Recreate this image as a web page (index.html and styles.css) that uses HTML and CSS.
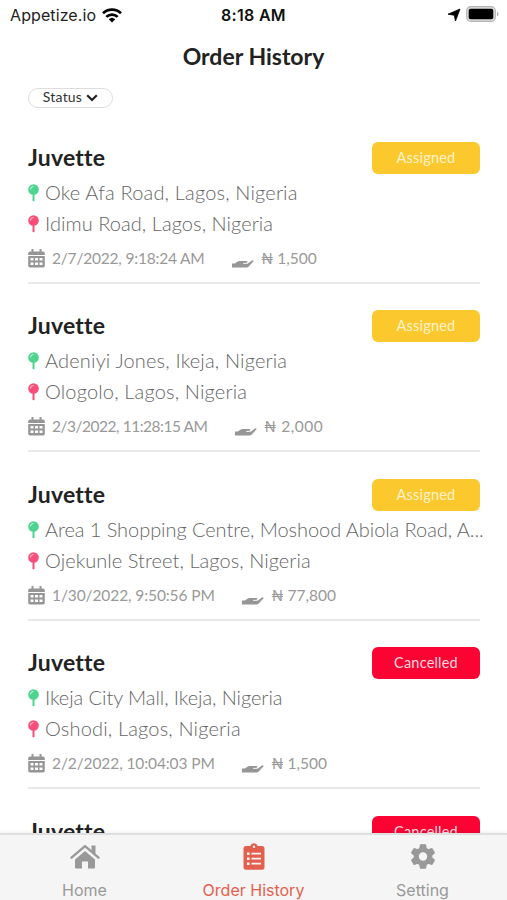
FILE: index.html
```html
<!DOCTYPE html>
<html lang="en">
<head>
<meta charset="utf-8">
<title>Order History</title>
<link rel="stylesheet" href="styles.css">
</head>
<body>
<svg class="sprite" aria-hidden="true">
  <symbol id="pin" viewBox="0.5 0 11 18"><path d="M5 10h2v6.500l-1 1-1-1z"/><circle cx="6" cy="5.500" r="5.300"/><path d="M3 5a3 3 0 0 1 2.600-2.500" fill="none" stroke="#fff" stroke-opacity=".75" stroke-width="1.100" stroke-linecap="round"/></symbol>
  <symbol id="calendar" viewBox="0 0 17 19"><path d="M3.500 0h2v2.400h6V0h2v2.400H15a1.800 1.800 0 0 1 1.800 1.800V6H.2V4.200A1.800 1.800 0 0 1 2 2.400h1.500z"/><path fill-rule="evenodd" d="M.2 7h16.600v9.800A1.700 1.700 0 0 1 15.100 18.500H1.900A1.700 1.700 0 0 1 .2 16.800zM2.500 9v2.500h3V9zM7 9v2.500h3V9zM11.500 9v2.500h3V9zM2.500 13.500V16h3v-2.500zM7 13.500V16h3v-2.500zM11.500 13.500V16h3v-2.500z"/></symbol>
  <symbol id="hand" viewBox="0 0 22 9"><path d="M0 3.500h3C5 1.500 7 1 9 1h5.500c1.300 0 1.300 1.700 0 1.800l-3.500.3v.7h4.500L20 .5c1-.7 2 .2 1.300 1.100l-4.600 5c-.7.700-1.300.9-2.200.9H0z"/></symbol>
</svg>
<div class="screen">
  <header class="statusbar">
    <div class="carrier"><span class="carrier-name">Appetize.io</span>
      <svg class="wifi" viewBox="0 0 20 15"><g fill="none" stroke="#000" stroke-width="2.600"><path d="M1 5.200a13 13 0 0 1 18 0"/><path d="M4.300 8.900a8.200 8.200 0 0 1 11.400 0"/></g><path d="M6.700 11.200a4.800 4.800 0 0 1 6.600 0L10 14.600z"/></svg>
    </div>
    <div class="clock">8:18 AM</div>
    <div class="power">
      <svg class="locate" viewBox="0 0 12 12"><path d="M12 0 7.500 12 6.200 6.200 0 5.200z" stroke="#000" stroke-width=".8" stroke-linejoin="round"/></svg>
      <svg class="battery" viewBox="0 0 33 16"><rect x=".7" y=".7" width="28.600" height="14.600" rx="4" fill="#ddd" stroke="#b5b5b5" stroke-width="1.200"/><rect x="2.700" y="2.700" width="24.600" height="10.600" rx="2"/><path d="M31 5.500q1.500.8 1.500 2.500T31 10.500z" fill="#aaa"/></svg>
    </div>
  </header>
  <h1>Order History</h1>
  <button class="filter"><span class="filter-label">Status</span><svg viewBox="0 0 12 8"><path d="m1.200 1.200 4.800 4.800 4.800-4.800" fill="none" stroke="#222" stroke-width="2.200"/></svg></button>
  <main class="orders">
    <article class="order">
      <div class="order-head"><h2>Juvette</h2><span class="badge">Assigned</span></div>
      <p class="place from wide"><svg><use href="#pin"/></svg><span>Oke Afa Road, Lagos, Nigeria</span></p>
      <p class="place to"><svg><use href="#pin"/></svg><span>Idimu Road, Lagos, Nigeria</span></p>
      <div class="meta"><svg class="cal"><use href="#calendar"/></svg><time class="snug">2/7/2022, 9:18:24 AM</time><svg class="hand"><use href="#hand"/></svg><span class="price">₦ 1,500</span></div>
    </article>
    <article class="order">
      <div class="order-head"><h2>Juvette</h2><span class="badge">Assigned</span></div>
      <p class="place from wide"><svg><use href="#pin"/></svg><span>Adeniyi Jones, Ikeja, Nigeria</span></p>
      <p class="place to wide"><svg><use href="#pin"/></svg><span>Ologolo, Lagos, Nigeria</span></p>
      <div class="meta"><svg class="cal"><use href="#calendar"/></svg><time class="tight">2/3/2022, 11:28:15 AM</time><svg class="hand"><use href="#hand"/></svg><span class="price loose">₦ 2,000</span></div>
    </article>
    <article class="order">
      <div class="order-head"><h2>Juvette</h2><span class="badge">Assigned</span></div>
      <p class="place from narrow"><svg><use href="#pin"/></svg><span>Area 1 Shopping Centre, Moshood Abiola Road, A...</span></p>
      <p class="place to"><svg><use href="#pin"/></svg><span>Ojekunle Street, Lagos, Nigeria</span></p>
      <div class="meta"><svg class="cal"><use href="#calendar"/></svg><time>1/30/2022, 9:50:56 PM</time><svg class="hand"><use href="#hand"/></svg><span class="price">₦ 77,800</span></div>
    </article>
    <article class="order">
      <div class="order-head"><h2>Juvette</h2><span class="badge cancelled">Cancelled</span></div>
      <p class="place from narrow"><svg><use href="#pin"/></svg><span>Ikeja City Mall, Ikeja, Nigeria</span></p>
      <p class="place to wide"><svg><use href="#pin"/></svg><span>Oshodi, Lagos, Nigeria</span></p>
      <div class="meta"><svg class="cal"><use href="#calendar"/></svg><time>2/2/2022, 10:04:03 PM</time><svg class="hand"><use href="#hand"/></svg><span class="price">₦ 1,500</span></div>
    </article>
    <article class="order">
      <div class="order-head"><h2>Juvette</h2><span class="badge cancelled">Cancelled</span></div>
    </article>
  </main>
  <nav class="tabs">
    <a class="tab"><svg viewBox="0 0 30 26"><path d="M15 7 25 15.500V23.500a1 1 0 0 1-1 1h-6V17.500h-6v7H6a1 1 0 0 1-1-1v-8z"/><path d="m1.500 13.700 13.500-11.500 13.500 11.500" fill="none" stroke="currentColor" stroke-width="2.400" stroke-linecap="round" stroke-linejoin="round"/><path d="M21.500 1.500h4v9l-4-3.500z"/></svg><span>Home</span></a>
    <a class="tab active"><svg viewBox="0 0 30 26"><path fill-rule="evenodd" d="M6.500 2h5a3.600 3.600 0 0 1 7 0h5A2.300 2.300 0 0 1 25.500 4.500v19a2.300 2.300 0 0 1-2.300 2.300H6.800A2.300 2.300 0 0 1 4.500 23.500v-19A2.300 2.300 0 0 1 6.500 2z"/><g fill="#f5f5f5"><circle cx="15" cy="2.800" r="1.200"/><path d="M8 8.500h2.600v2.400H8zM12.500 8.800H22v1.800h-9.500zM8 13.500h2.600v2.400H8zM12.500 13.800H22v1.800h-9.500zM8 18.500h2.600v2.400H8zM12.500 18.800H22v1.800h-9.500z"/></g></svg><span>Order History</span></a>
    <a class="tab"><svg viewBox="0 0 30 26"><path fill-rule="evenodd" stroke="currentColor" stroke-width="1.200" stroke-linejoin="round" d="M12.500.8h5l.7 3.600 2.200 1.300 3.500-1.200 2.500 4.300-2.700 2.400v2.500l2.700 2.400-2.500 4.300-3.500-1.200-2.200 1.300-.7 3.600h-5l-.7-3.600-2.200-1.300-3.500 1.200-2.500-4.300 2.700-2.400v-2.500L3.600 8.800l2.500-4.300 3.500 1.200 2.200-1.300zM15 7.700a4.800 4.800 0 1 0 0 9.600 4.800 4.800 0 0 0 0-9.600z"/></svg><span>Setting</span></a>
  </nav>
</div>
</body>
</html>
```
FILE: styles.css
```css
* { box-sizing: border-box; }
body { margin: 0; background: #fff; font-family: Lato, "Liberation Sans", sans-serif; color: #222; }
h1, h2, p { margin: 0; }
.sprite { position: absolute; width: 0; height: 0; }
.screen { width: 507px; height: 900px; overflow: hidden; display: flex; flex-direction: column; }
.statusbar { height: 30px; flex: none; padding: 0 8px 0 10px; display: grid; grid-template-columns: 1fr auto 1fr; align-items: center; font-family: Inter, sans-serif; font-size: 16px; color: #222; }
.carrier { display: flex; align-items: center; gap: 6px; }
.carrier-name { letter-spacing: .1px; }
.wifi { width: 20px; height: 15px; }
.clock { margin-right: 2px; font-weight: 600; letter-spacing: .3px; color: #111; }
.power { display: flex; justify-content: flex-end; align-items: center; gap: 6px; }
.locate { width: 12px; height: 12px; overflow: visible; }
.battery { width: 33px; height: 16px; margin-top: -2px; }
h1 { height: 54px; flex: none; line-height: 52px; text-align: center; font-size: 23px; font-weight: 700; }
.filter { width: 85px; height: 20px; margin: 4px 0 0 28px; flex: none; padding: 0 0 1px; display: flex; align-items: center; justify-content: center; gap: 4px; border: 1px solid #ddd; border-radius: 10px; background: #fff; font: 14px Lato, sans-serif; color: #333; }
.filter-label { line-height: 16px; margin-top: -1px; letter-spacing: .2px; }
.filter svg { width: 12px; height: 8px; }
.orders { flex: 1; min-height: 0; overflow: hidden; padding: 33.500px 23px 0 28px; }
.order { height: 168.500px; }
.order-head { height: 32px; margin-right: 4px; display: flex; justify-content: space-between; align-items: center; }
h2 { font-size: 23px; line-height: 32px; margin-top: -2px; font-weight: 700; letter-spacing: .2px; }
.badge { width: 108px; height: 32px; border-radius: 6px; background: #fbc82e; color: #fff3cd; font-size: 14.500px; letter-spacing: .2px; line-height: 31px; text-align: center; }
.cancelled { background: #fb0434; color: #ffd9df; }
.place { height: 31px; display: flex; align-items: center; gap: 6px; font-size: 20px; font-weight: 300; letter-spacing: .06px; color: #666; white-space: nowrap; }
.place span { margin-top: -2px; }
.wide { letter-spacing: .17px; }
.narrow { letter-spacing: -.06px; }
.order-head + .place { margin-top: 3.500px; }
.place svg { width: 11px; height: 18px; }
.from svg { fill: #4dd58f; }
.to svg { fill: #f94e79; }
.meta { height: 44.500px; padding-bottom: 4px; margin-right: 4px; display: flex; align-items: center; border-bottom: 2px solid #e9e9e9; font-size: 15.500px; color: #999; }
.meta time { margin-top: -1px; letter-spacing: -.1px; }
.meta .snug { letter-spacing: -.2px; }
.meta .tight { letter-spacing: -.48px; }
.price { margin-top: -1px; }
.loose { letter-spacing: .5px; }
.cal { width: 17px; height: 19px; margin-right: 7px; fill: #969696; }
.hand { width: 22px; height: 9px; margin: 12px 7px 0 27.500px; fill: #969696; }
.tabs { height: 67px; flex: none; display: grid; grid-template-columns: repeat(3, 1fr); border-top: 2px solid #dfdfdf; background: #f5f5f5; box-shadow: 0 -1px 4px #0001; font-family: Inter, sans-serif; font-size: 16px; }
.tab { padding-top: 9px; display: flex; flex-direction: column; align-items: center; gap: 10px; color: #999; fill: currentColor; }
.tab svg { width: 30px; height: 26px; overflow: visible; }
.tab span { line-height: 20px; }
.active { color: #e3604e; }
```
